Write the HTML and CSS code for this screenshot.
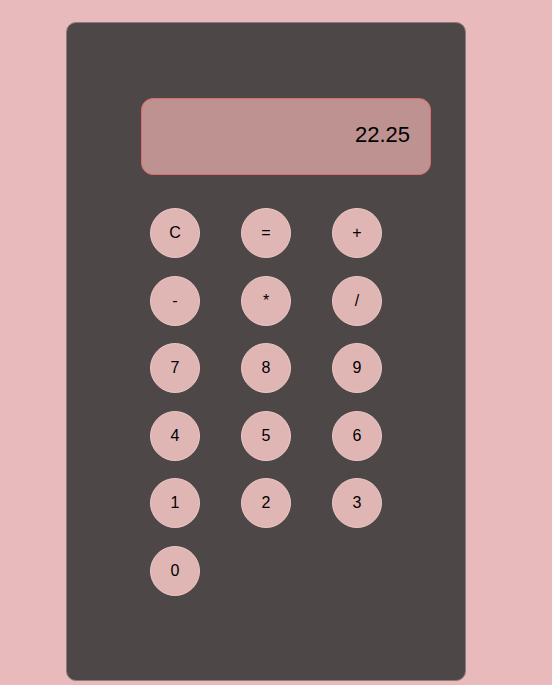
FILE: index.html
```html
<!DOCTYPE html>
<html>
<head>
<meta charset="utf-8">
<link rel="stylesheet" href="styles.css">
</head>
<body>
<div class="calc">
  <div class="display">22.25</div>
  <div class="keys">
    <button class="key">C</button>
    <button class="key">=</button>
    <button class="key">+</button>
    <button class="key">-</button>
    <button class="key">*</button>
    <button class="key">/</button>
    <button class="key">7</button>
    <button class="key">8</button>
    <button class="key">9</button>
    <button class="key">4</button>
    <button class="key">5</button>
    <button class="key">6</button>
    <button class="key">1</button>
    <button class="key">2</button>
    <button class="key">3</button>
    <button class="key">0</button>
  </div>
</div>
</body>
</html>
```
FILE: styles.css
```css
html, body {
  margin: 0;
  padding: 0;
}
body {
  background: #e9babc;
  font-family: "Liberation Sans", Arial, sans-serif;
  padding: 22px 0 0 66px;
  height: 685px;
  box-sizing: border-box;
  overflow: hidden;
}
.calc {
  width: 400px;
  height: 659px;
  box-sizing: border-box;
  background: #4d4847;
  border: 1px solid #8a7d7c;
  border-radius: 10px;
  padding: 75px 0 0 74px;
}
.display {
  width: 290px;
  height: 77px;
  box-sizing: border-box;
  background: #bd9291;
  border: 1px solid #e06a6a;
  border-radius: 12px;
  font-size: 22px;
  color: #000;
  display: flex;
  align-items: center;
  justify-content: flex-end;
  padding: 0 20px 3px 0;
}
.keys {
  margin-top: 33px;
  margin-left: 9px;
  display: grid;
  grid-template-columns: repeat(3, 50px);
  grid-auto-rows: 50px;
  column-gap: 41px;
  row-gap: 17.6px;
}
.key {
  width: 50px;
  height: 50px;
  border-radius: 50%;
  border: 1px solid #ecc6c5;
  background: #e0b6b5;
  font-family: "Liberation Sans", Arial, sans-serif;
  font-size: 16px;
  color: #000;
  padding: 0;
  margin: 0;
}
```
